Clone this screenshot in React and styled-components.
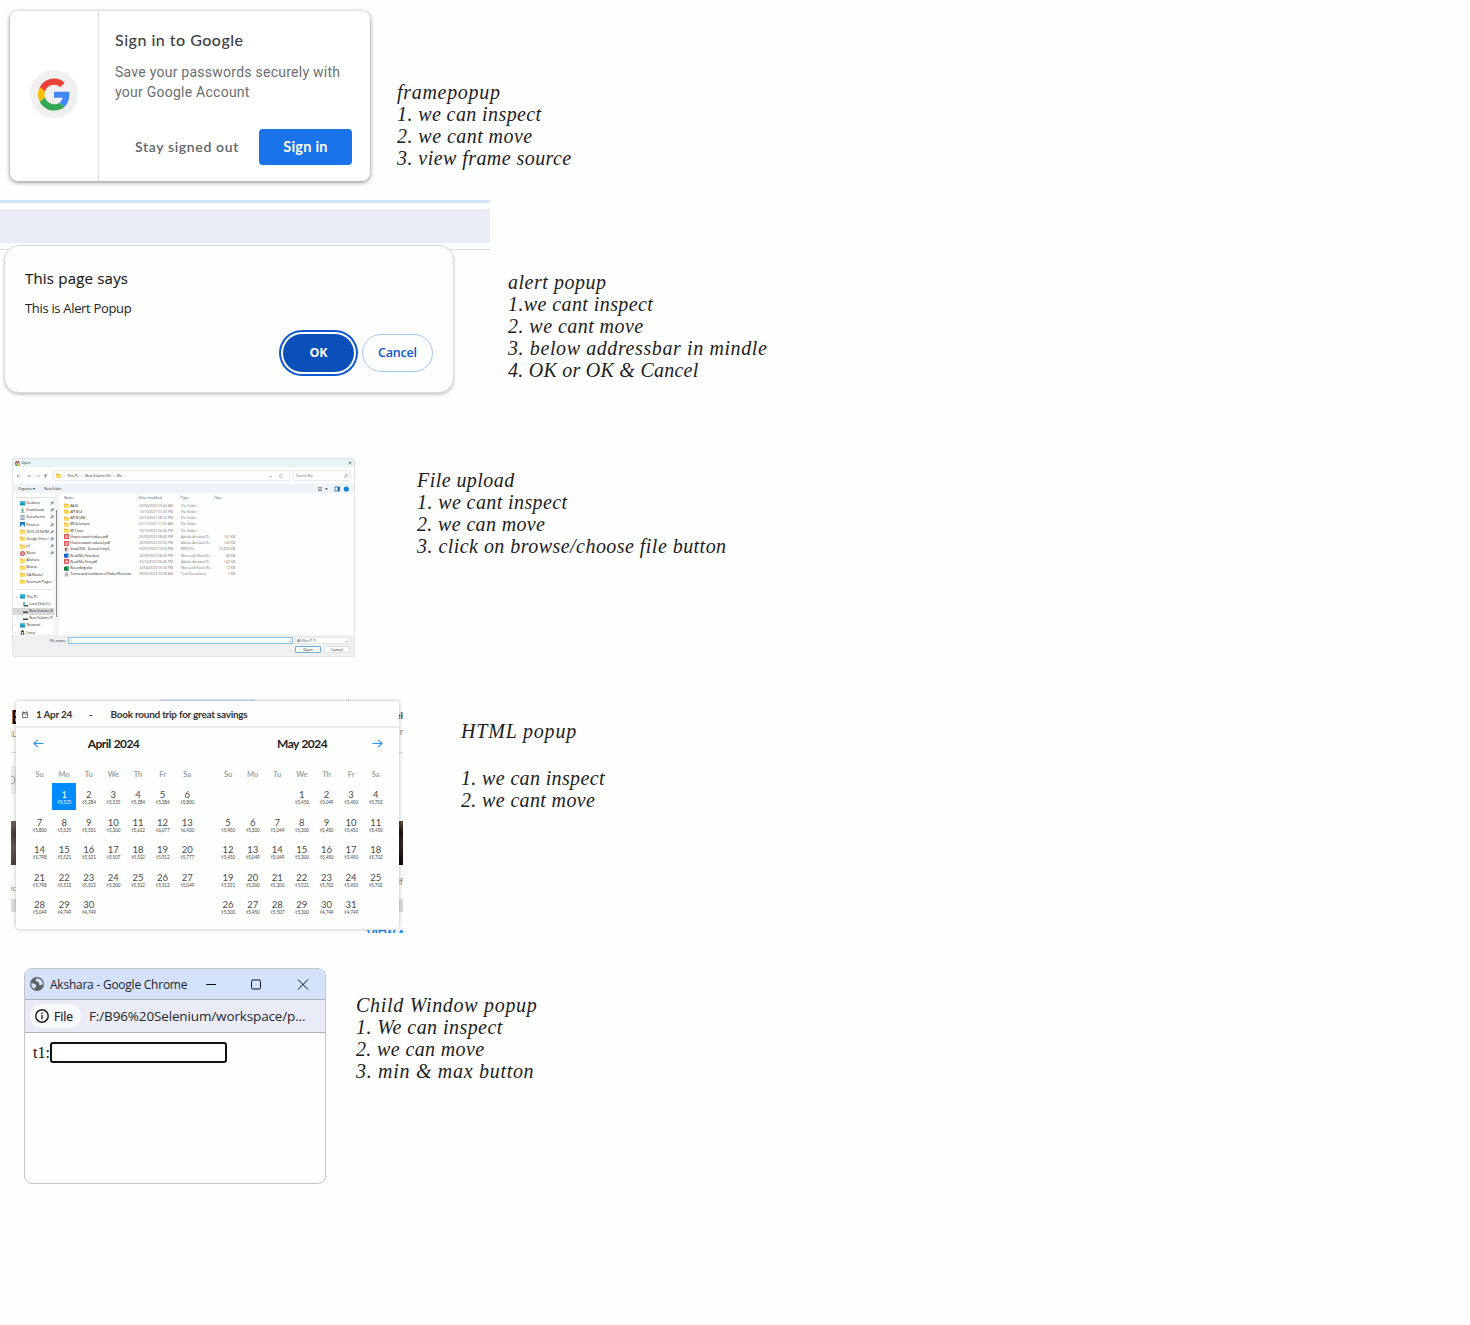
import React from "react";
import styled, { createGlobalStyle } from "styled-components";

const ui = '"Open Sans", "Noto Sans", sans-serif';
const lato = 'Lato, "Noto Sans", sans-serif';

const Global = createGlobalStyle`
  * { box-sizing: border-box; }
  body { margin: 0; background: #fefefe; }
  button, input { font: inherit; padding: 0; margin: 0; }
`;

const Page = styled.main`
  width: 1470px;
  height: 1325px;
  display: flex;
  flex-direction: column;
  overflow: hidden;
`;

const Section = styled.section`
  display: flex;
  align-items: flex-start;
  flex: none;
  height: ${(p) => p.$h}px;
  padding-left: ${(p) => p.$left || 0}px;
  padding-top: ${(p) => p.$top || 0}px;
`;

const NoteBox = styled.div`
  display: flex;
  flex-direction: column;
  margin-left: ${(p) => p.$left}px;
  margin-top: ${(p) => p.$top}px;
  font: italic 20px/22px "Liberation Serif", "Times New Roman", serif;
  color: #1c1c1c;
`;

const NoteLine = styled.div`
  height: 22px;
  white-space: pre;
  letter-spacing: ${(p) => p.$ls}px;
  margin-bottom: ${(p) => p.$gap || 0}px;
`;

function Note({ left, top, lines }) {
  return (
    <NoteBox $left={left} $top={top}>
      {lines.map(([text, ls, gap]) => (
        <NoteLine key={text} $ls={ls} $gap={gap}>{text}</NoteLine>
      ))}
    </NoteBox>
  );
}

/* ---------- Google sign-in bubble ---------- */

const SignCard = styled.div`
  display: flex;
  width: 360px;
  height: 170px;
  border-radius: 8px;
  background: #fff;
  box-shadow: 0 1px 4px rgba(0, 0, 0, 0.38), 0 2px 5px rgba(0, 0, 0, 0.12);
`;
const SignLogo = styled.div`
  width: 89px;
  border-right: 1px solid #e2e2e2;
  display: flex;
  align-items: center;
  justify-content: center;
`;
const LogoDisc = styled.div`
  width: 48px;
  height: 48px;
  margin-top: -4px;
  border-radius: 50%;
  background: #f0f0f0;
  display: flex;
  align-items: center;
  justify-content: center;
`;
const SignBody = styled.div`
  flex: 1;
  padding: 17px 18px 0 16px;
`;
const SignTitle = styled.h2`
  margin: 0;
  font: 500 16px/24px ${lato};
  letter-spacing: 0.5px;
  color: #3c4043;
`;
const SignText = styled.p`
  margin: 10px 0 0;
  font: 14px/20px Roboto, sans-serif;
  letter-spacing: 0.25px;
  color: #6a6e73;
  white-space: nowrap;
`;
const SignActions = styled.div`
  display: flex;
  justify-content: flex-end;
  align-items: center;
  margin-top: 27px;
  gap: 20px;
  font: 600 14px/36px ${lato};
`;
const GhostButton = styled.button`
  border: 0;
  background: none;
  color: #5f6368;
  letter-spacing: 0.65px;
`;
const BlueButton = styled.button`
  width: 93px;
  height: 36px;
  border: 0;
  border-radius: 4px;
  background: #1a73e8;
  color: #fff;
  font-weight: 700;
  font-size: 14.500px;
  letter-spacing: 0.25px;
`;

function GoogleG() {
  return (
    <svg width="32" height="33" viewBox="0 0 48 48">
      <path fill="#EA4335" d="M24 9.5c3.54 0 6.71 1.22 9.21 3.6l6.85-6.85C35.9 2.38 30.47 0 24 0 14.62 0 6.51 5.38 2.56 13.22l7.98 6.19C12.43 13.72 17.74 9.5 24 9.5z" />
      <path fill="#4285F4" d="M46.98 24.55c0-1.57-.15-3.09-.38-4.55H24v9.02h12.94c-.58 2.96-2.26 5.48-4.78 7.18l7.73 6c4.51-4.18 7.09-10.36 7.09-17.65z" />
      <path fill="#FBBC05" d="M10.53 28.59c-.48-1.45-.76-2.99-.76-4.59s.27-3.14.76-4.59l-7.98-6.19C.92 16.46 0 20.12 0 24c0 3.88.92 7.54 2.56 10.78l7.97-6.19z" />
      <path fill="#34A853" d="M24 48c6.48 0 11.93-2.13 15.89-5.81l-7.73-6c-2.15 1.45-4.92 2.3-8.16 2.3-6.26 0-11.57-4.22-13.47-9.91l-7.98 6.19C6.51 42.62 14.62 48 24 48z" />
    </svg>
  );
}

/* ---------- Alert popup ---------- */

const AlertArea = styled.div`
  width: 490px;
  height: 215px;
`;
const TabEdge = styled.div`
  height: 3px;
  background: #d3e3fd;
`;
const ToolStrip = styled.div`
  margin-top: 6px;
  height: 34px;
  background: #e9ecf6;
`;
const ToolEdge = styled.div`
  height: 7px;
  border-bottom: 1px solid #dcdcdc;
`;
const AlertBox = styled.div`
  position: relative;
  width: 450px;
  height: 148px;
  margin: -5px 0 0 4px;
  padding: 20px 20px 0;
  border: 1px solid #dadada;
  border-radius: 15px;
  background: #fefefe;
  box-shadow: 0 2px 3px rgba(0, 0, 0, 0.2);
  font-family: ${ui};
`;
const AlertTitle = styled.div`
  font-size: 15px;
  line-height: 24px;
  font-weight: 500;
  letter-spacing: 0.2px;
  color: #1f1f1f;
  -webkit-text-stroke: 0.2px #1f1f1f;
`;
const AlertText = styled.div`
  margin-top: 8px;
  font-size: 13px;
  line-height: 20px;
  letter-spacing: -0.32px;
  color: #222;
`;
const AlertActions = styled.div`
  display: flex;
  justify-content: flex-end;
  align-items: center;
  gap: 8px;
  margin-top: 16px;
`;
const Pill = styled.button`
  width: ${(p) => p.$w}px;
  height: 38px;
  border-radius: 19px;
  font: ${(p) => (p.$main ? 700 : 600)} 12.5px/1 ${ui};
  letter-spacing: -0.2px;
  color: ${(p) => (p.$main ? "#fff" : "#0b57d0")};
  background: ${(p) => (p.$main ? "#0b50b8" : "#fefefe")};
  border: ${(p) => (p.$main ? "0" : "1px solid #a8c7fa")};
  box-shadow: ${(p) => (p.$main ? "0 0 0 2px #fff, 0 0 0 4px #0b57d0" : "none")};
`;

/* ---------- Open-file dialog ---------- */

const FileDialog = styled.div`
  width: 343px;
  height: 199px;
  border: 1px solid #dfe3e6;
  border-radius: 2px;
  background: #fefefe;
  overflow: hidden;
  font: 3.7px/6px ${ui};
  letter-spacing: -0.13px;
  color: #333;
`;
const FRow = styled.div`
  display: flex;
  align-items: center;
  height: ${(p) => p.$h}px;
  padding: 0 ${(p) => p.$px || 0}px;
  gap: ${(p) => p.$gap || 0}px;
  background: ${(p) => p.$bg || "transparent"};
  white-space: nowrap;
`;
const Spacer = styled.div`
  flex: ${(p) => (p.$w ? `0 0 ${p.$w}px` : "1")};
`;
const AddressBox = styled.div`
  display: flex;
  align-items: center;
  width: ${(p) => p.$w}px;
  height: 11px;
  padding: 0 2px;
  gap: ${(p) => p.$gap || 2}px;
  border: 1px solid #ececec;
  color: ${(p) => (p.$dim ? "#777" : "#333")};
`;
const FileMain = styled.div`
  display: flex;
  height: 142px;
`;
const Side = styled.div`
  width: 41px;
  height: 142px;
  padding-top: 3.500px;
  overflow: hidden;
`;
const SideLine = styled.div`
  height: 1px;
  margin: ${(p) => p.$m};
  background: #e2e2e2;
`;
const SideItem = styled.div`
  display: flex;
  align-items: center;
  gap: 1.2px;
  height: 7.16px;
  padding-left: ${(p) => p.$pl}px;
  background: ${(p) => (p.$active ? "#d8d8d8" : "transparent")};
  white-space: nowrap;
`;
const SideName = styled.span`
  flex: 1;
`;
const Twist = styled.span`
  width: 4px;
  color: #666;
`;
const Scroll = styled.div`
  width: 5px;
  padding: 17px 1px 0 2px;
  background: #f3f3f3;
`;
const Thumb = styled.div`
  width: 1px;
  height: 107px;
  background: #8a8a8a;
`;
const Files = styled.div`
  flex: 1;
  padding: 0 0 0 5px;
`;
const FileLine = styled.div`
  display: grid;
  grid-template-columns: 75px 42px 34px 20px;
  align-items: center;
  height: ${(p) => (p.$head ? 9 : 6.27)}px;
  margin-bottom: ${(p) => (p.$head ? 0.4 : 0)}px;
  color: ${(p) => (p.$head ? "#4d5f7a" : "#7c7c7c")};
  white-space: nowrap;
`;
const HeadCell = styled.span`
  height: 9px;
  margin-left: -2px;
  padding-left: 1px;
  line-height: 9px;
  border-left: 1px solid #f0f0f0;
`;
const FileName = styled.span`
  display: flex;
  align-items: center;
  gap: 1.2px;
  letter-spacing: -0.2px;
  color: ${(p) => (p.$head ? "inherit" : "#2c2c2c")};
`;
const SizeCell = styled.span`
  text-align: right;
`;
const FileFoot = styled.div`
  height: 24px;
  padding: 2px 4px 0 0;
  background: #f0f0f0;
`;
const FootInput = styled.div`
  width: ${(p) => p.$w}px;
  height: 7px;
  display: flex;
  align-items: center;
  justify-content: space-between;
  padding: 0 1px;
  background: #fff;
  border: 1px solid ${(p) => (p.$active ? "#84bfe6" : "#e4e4e4")};
`;
const FootButton = styled.button`
  width: 26px;
  height: 7px;
  line-height: 5px;
  background: #fdfdfd;
  border: 1px solid ${(p) => (p.$active ? "#6fb0de" : "#e0e0e0")};
  border-radius: 1px;
`;

function MiniIcon({ kind }) {
  const s = { width: 5, height: 5, viewBox: "0 0 10 10", style: { flex: "none" } };
  if (kind === "folder") return <svg {...s}><path d="M0 1h4l1 1.5h5V9H0z" fill="#f3bd3c" /><path d="M0 4h10v5H0z" fill="#ffd765" /></svg>;
  if (kind === "pdf") return <svg {...s}><rect width="10" height="10" fill="#e9565a" /><path d="M2 8c3-2 3-6 3-6s1 4 3 4-4 0-6 2" stroke="#fff" strokeWidth="1.2" fill="none" /></svg>;
  if (kind === "mp4") return <svg {...s}><rect x="1" width="8" height="10" fill="#ddd" /><path d="M2 2h5l-3 6h-2z" fill="#b05a36" /></svg>;
  if (kind === "doc") return <svg {...s}><rect x="2" width="8" height="10" fill="#7fb2ea" /><rect y="2" width="7" height="7" fill="#185abd" /></svg>;
  if (kind === "xls") return <svg {...s}><rect x="2" width="8" height="10" fill="#58b883" /><rect y="2" width="7" height="7" fill="#107c41" /></svg>;
  if (kind === "txt") return <svg {...s}><rect x="1" width="8" height="10" fill="#ddd" /><path d="M2 3h6M2 5h6M2 7h6" stroke="#888" strokeWidth=".8" /></svg>;
  if (kind === "down") return <svg {...s}><path d="M5 0v7M2 4l3 3 3-3M1 9.5h8" stroke="#18a06a" strokeWidth="1.4" fill="none" /></svg>;
  if (kind === "page") return <svg {...s}><rect x="1" width="8" height="10" fill="#8ba6bd" /><path d="M3 3h4M3 5h4M3 7h4" stroke="#fff" /></svg>;
  if (kind === "pic") return <svg {...s}><rect width="10" height="10" fill="#1778c8" /><path d="M0 10l5-6 5 6z" fill="#d9efff" /></svg>;
  if (kind === "music") return <svg {...s}><circle cx="5" cy="5" r="5" fill="#d65a50" /><circle cx="5" cy="5" r="2" fill="#fff" /></svg>;
  if (kind === "drive") return <svg {...s}><path d="M0 5h10v3H0z" fill="#444" /></svg>;
  if (kind === "disk") return <svg {...s}><path d="M0 1h4v4H0z" fill="#1696e0" /><path d="M1 6h9v3H1z" fill="#555" /></svg>;
  if (kind === "linux") return <svg {...s}><path d="M5 0c4 2 2 5 4 9H1c2-4 0-7 4-9z" fill="#222" /><circle cx="5" cy="6" r="2" fill="#fff" /></svg>;
  if (kind === "chrome") return <svg {...s}><circle cx="5" cy="5" r="5" fill="#36a852" /><path d="M5 5L.7 2.5A5 5 0 019.3 2.5z" fill="#e94435" /><path d="M5 5l4.4-2.5A5 5 0 015 10z" fill="#fbbc05" /><circle cx="5" cy="5" r="2" fill="#4285f4" stroke="#fff" /></svg>;
  return <svg {...s}><rect width="10" height="8" y="1" fill="#1590b8" /><path d="M0 1h10v4H0z" fill="#37b2d8" /></svg>;
}

function PinIcon() {
  return (
    <svg width="4" height="4" viewBox="0 0 8 8">
      <path d="M4.500 .5L7.500 3.500 6 4 4.500 6.500 1.500 3.500 4 2zM3 5L.5 7.500" fill="#8fa5b3" stroke="#68808f" />
    </svg>
  );
}

const pinned = [
  ["pc", "Desktop", 1], ["down", "Downloads", 1], ["page", "Documents", 1], ["pic", "Pictures", 1],
  ["folder", "2019-20 MOM", 1], ["folder", "Google Drive (", 1], ["folder", "p1", 1], ["music", "Music", 1],
  ["folder", "Akshara"], ["folder", "Bhanu"], ["folder", "QA Master"], ["folder", "Selenium Pages"],
];
const tree = [
  ["pc", "This PC", 2, "⌄"], ["disk", "Local Disk (C:)", 4.5, "›"], ["drive", "New Volume (E", 4.5, "›", true],
  ["drive", "New Volume (F", 4.5, "›"], ["pc", "Network", 2, "›"], ["linux", "Linux", 2, "›"],
];
const files = [
  ["folder", "AA B", "22/06/2023 10:24 AM", "File folder", ""],
  ["folder", "API B14", "10/10/2021 07:25 PM", "File folder", ""],
  ["folder", "API B14M", "25/10/2021 08:12 PM", "File folder", ""],
  ["folder", "B9 Selenium", "01/11/2021 11:05 AM", "File folder", ""],
  ["folder", "BT1 Java", "10/10/2021 06:26 PM", "File folder", ""],
  ["pdf", "How to watch videos.pdf", "26/09/2023 08:06 PM", "Adobe Acrobat D...", "141 KB"],
  ["pdf", "How to watch videos2.pdf", "26/09/2023 02:55 PM", "Adobe Acrobat D...", "142 KB"],
  ["mp4", "Install IDK - Session1.mp4", "05/07/2023 10:53 PM", "MP4 File", "23,823 KB"],
  ["doc", "Read Me First.docx", "26/09/2023 08:06 PM", "Microsoft Word D...", "46 KB"],
  ["pdf", "Read Me First.pdf", "22/12/2022 06:45 PM", "Adobe Acrobat D...", "142 KB"],
  ["xls", "Recording.xlsx", "22/04/2023 05:00 PM", "Microsoft Excel W...", "12 KB"],
  ["txt", "Terms and conditions of Video Recor.txt", "09/05/2023 10:49 AM", "Text Document", "1 KB"],
];

function OpenDialog() {
  return (
    <FileDialog>
      <FRow $h={8} $bg="#e8f3f8" $px={2} $gap={1.5}>
        <MiniIcon kind="chrome" /><span>Open</span><Spacer />
        <svg width="4" height="4" viewBox="0 0 8 8"><path d="M1 1l6 6M7 1L1 7" stroke="#333" /></svg>
      </FRow>
      <FRow $h={17} $gap={3}>
        <svg width="37" height="6" viewBox="0 0 37 6" fill="none" stroke="#8c8c8c" strokeWidth=".6">
          <path d="M7.500 3H4M5.500 1.500L4 3l1.500 1.500M14 3h3.500M16 1.500L17.500 3 16 4.500M23.500 2.500l1.500 1.500 1.500-1.500" />
          <path d="M32.500 5V1.500M31 3l1.500-1.500L34 3" stroke="#666" />
        </svg>
        <AddressBox $w={237} $gap={2.6}>
          <MiniIcon kind="folder" /><span>›</span><span>This PC</span><span>›</span>
          <span>New Volume (E:)</span><span>›</span><span>Rio</span><span>›</span>
          <Spacer /><span>⌄</span><Spacer $w={2} />
          <svg width="4" height="4" viewBox="0 0 8 8"><path d="M7 4a3 3 0 11-1-2.3V0" stroke="#888" fill="none" /></svg>
          <Spacer $w={1} />
        </AddressBox>
        <AddressBox $w={58} $dim>
          <span>Search Rio</span><Spacer />
          <svg width="4" height="4" viewBox="0 0 8 8"><circle cx="5" cy="3" r="2.4" stroke="#777" fill="none" /><path d="M3.2 4.8L0 8" stroke="#777" /></svg>
        </AddressBox>
      </FRow>
      <FRow $h={9} $bg="#eff3f7" $px={5} $gap={9}>
        <span>Organize ▾</span><span>New folder</span><Spacer />
        <svg width="32" height="6" viewBox="2 0 32 6">
          <path d="M3 1.500h4M3 3h4M3 4.500h4" stroke="#777" strokeWidth=".8" />
          <path d="M10 2.200h3l-1.500 2z" fill="#456" />
          <rect x="20" y="1" width="4.500" height="4" fill="#fff" stroke="#1f6fa8" strokeWidth=".8" />
          <rect x="22.500" y="1" width="2" height="4" fill="#1f6fa8" />
          <circle cx="31.300" cy="3" r="2.600" fill="#0b84d8" />
        </svg>
      </FRow>
      <FileMain>
        <Side>
          <SideLine $m="0 2px 2px 3px" />
          {pinned.map(([k, n, p]) => (
            <SideItem key={n} $pl={7}><MiniIcon kind={k} /><SideName>{n}</SideName>{p && <PinIcon />}</SideItem>
          ))}
          <SideLine $m="3.500px 2px 3.400px 3px" />
          {tree.map(([k, n, pl, c, a], i) => (
            <SideItem key={i} $pl={pl} $active={a}><Twist>{c}</Twist><MiniIcon kind={k} /><SideName>{n}</SideName></SideItem>
          ))}
        </Side>
        <Scroll><Thumb /></Scroll>
        <Files>
          <FileLine $head>
            <FileName $head>Name</FileName><HeadCell>Date modified</HeadCell><HeadCell>Type</HeadCell><HeadCell>Size</HeadCell>
          </FileLine>
          {files.map(([k, n, d, t, s]) => (
            <FileLine key={n}>
              <FileName><MiniIcon kind={k} />{n}</FileName><span>{d}</span><span>{t}</span><SizeCell>{s}</SizeCell>
            </FileLine>
          ))}
        </Files>
      </FileMain>
      <FileFoot>
        <FRow $h={7} $gap={2}>
          <Spacer /><span>File name:</span><FootInput $w={225} $active><span>|</span><span>⌄</span></FootInput>
          <FootInput $w={55}><span>All Files (*.*)</span><span>⌄</span></FootInput>
        </FRow>
        <FRow $h={10} $gap={3}>
          <Spacer /><FootButton $active>Open</FootButton><FootButton>Cancel</FootButton>
        </FRow>
      </FileFoot>
    </FileDialog>
  );
}

/* ---------- Calendar popup ---------- */

const CalScene = styled.div`
  display: grid;
  grid-template-columns: 5px 383px 4px;
  grid-template-rows: 2px 228px 4px;
  width: 392px;
  height: 234px;
  overflow: hidden;
  font-family: ${lato};
`;
const SceneTop = styled.div`
  grid-column: 1 / -1;
  display: flex;
  padding-left: 149px;
  gap: 93px;
`;
const TopTab = styled.div`
  width: ${(p) => p.$w}px;
  height: 2px;
  background: ${(p) => p.$bg};
`;
const SceneBottom = styled.div`
  grid-column: 1 / -1;
  padding-left: 356px;
  overflow: hidden;
  height: 4px;
  font: 900 11px/9px ${lato};
  letter-spacing: -0.2px;
  color: #1684f5;
  white-space: nowrap;
`;
const Edge = styled.div`
  display: flex;
  flex-direction: column;
  overflow: hidden;
`;
const EdgeText = styled.div`
  display: flex;
  justify-content: ${(p) => (p.$start ? "flex-start" : "flex-end")};
  flex: none;
  height: ${(p) => p.$h}px;
  font: ${(p) => p.$weight || 400} ${(p) => p.$size}px/${(p) => p.$h}px ${lato};
  color: ${(p) => p.$color || "#888"};
`;
const EdgeBlock = styled.div`
  flex: none;
  height: ${(p) => p.$h}px;
  background: ${(p) => p.$bg || "transparent"};
`;
const CalCard = styled.div`
  position: relative;
  background: #fefefe;
  border-radius: 3px;
  box-shadow: 0 0 4px rgba(0, 0, 0, 0.28);
`;
const CalTop = styled.div`
  display: flex;
  align-items: center;
  height: 27px;
  padding-left: 6px;
  border-bottom: 2px solid #ebebeb;
  font: 700 10px/14px ${lato};
  color: #333;
  white-space: pre;
`;
const TopText = styled.span`
  width: ${(p) => p.$w}px;
  letter-spacing: ${(p) => p.$ls || 0}px;
`;
const Months = styled.div`
  display: flex;
  padding: 7px 0 0 11.300px;
  gap: 16px;
`;
const Month = styled.div`
  width: 172.500px;
`;
const MonthHead = styled.div`
  display: grid;
  grid-template-columns: 22px 1fr 22px;
  align-items: center;
  justify-items: center;
  height: 17px;
  font: 700 12px/17px ${lato};
  letter-spacing: -0.55px;
  word-spacing: 0.6px;
  color: #222;
`;
const Week = styled.div`
  display: grid;
  grid-template-columns: repeat(7, 24.600px);
  height: ${(p) => p.$h || 27.6}px;
  margin-top: ${(p) => p.$mt || 0}px;
`;
const WeekDay = styled.span`
  text-align: center;
  font: 700 7.500px/10px ${lato};
  color: #9aa5a5;
`;
const Day = styled.div`
  display: flex;
  flex-direction: column;
  align-items: center;
  padding-top: 7.500px;
  background: ${(p) => (p.$on ? "#008cff" : "transparent")};
  color: ${(p) => (p.$on ? "#fff" : "#4a4a4a")};
`;
const DayNum = styled.span`
  font: 9.500px/10px ${lato};
`;
const Price = styled.span`
  font: 4.700px/5px ${lato};
  letter-spacing: -0.1px;
`;

const april = [
  [null, [1, "5,525"], [2, "5,284"], [3, "5,525"], [4, "5,284"], [5, "5,284"], [6, "5,800"]],
  [[7, "5,800"], [8, "5,525"], [9, "5,531"], [10, "5,300"], [11, "5,612"], [12, "6,077"], [13, "6,420"]],
  [[14, "5,798"], [15, "5,521"], [16, "5,521"], [17, "5,507"], [18, "5,512"], [19, "5,512"], [20, "5,777"]],
  [[21, "5,798"], [22, "5,512"], [23, "5,512"], [24, "5,300"], [25, "5,512"], [26, "5,512"], [27, "5,049"]],
  [[28, "5,049"], [29, "4,749"], [30, "4,749"]],
];
const may = [
  [null, null, null, [1, "5,450"], [2, "5,049"], [3, "5,450"], [4, "5,702"]],
  [[5, "5,450"], [6, "5,300"], [7, "5,049"], [8, "5,300"], [9, "5,450"], [10, "5,450"], [11, "5,450"]],
  [[12, "5,450"], [13, "5,049"], [14, "5,049"], [15, "5,300"], [16, "5,450"], [17, "5,450"], [18, "5,702"]],
  [[19, "5,521"], [20, "5,300"], [21, "5,300"], [22, "5,521"], [23, "5,702"], [24, "5,450"], [25, "5,702"]],
  [[26, "5,300"], [27, "5,450"], [28, "5,507"], [29, "5,300"], [30, "4,749"], [31, "4,749"]],
];

function Arrow({ flip }) {
  return (
    <svg width="11" height="9" viewBox="0 0 11 9">
      <path d={flip ? "M.5 4.500h9.500M6.300 .8L10 4.500 6.300 8.200" : "M10.500 4.500H1M4.700 .8L1 4.500l3.700 3.700"} fill="none" stroke="#2b93f6" strokeWidth="1.100" />
    </svg>
  );
}

function MonthGrid({ title, weeks, selected, prev, next }) {
  return (
    <Month>
      <MonthHead><span>{prev && <Arrow />}</span><span>{title}</span><span>{next && <Arrow flip />}</span></MonthHead>
      <Week $h={10} $mt={17.5}>
        {["Su", "Mo", "Tu", "We", "Th", "Fr", "Sa"].map((d) => <WeekDay key={d}>{d}</WeekDay>)}
      </Week>
      <div>
        {weeks.map((w, i) => (
          <Week key={i} $mt={i ? 0 : 3}>
            {w.map((d, j) => (
              <Day key={j} $on={!!d && d[0] === selected}>
                {d && <><DayNum>{d[0]}</DayNum><Price>₹{d[1]}</Price></>}
              </Day>
            ))}
          </Week>
        ))}
      </div>
    </Month>
  );
}

function CalendarPopup() {
  return (
    <CalScene>
      <SceneTop><TopTab $w={95} $bg="#d9e9f7" /><TopTab $w={1} $bg="#ccc" /></SceneTop>
      <Edge>
        <EdgeBlock $h={7} />
        <EdgeText $h={18} $size={19} $weight={900} $color="#111" $start>B</EdgeText>
        <EdgeText $h={16} $size={8}>BL</EdgeText>
        <EdgeBlock $h={10} />
        <EdgeBlock $h={1} $bg="#ddd" />
        <EdgeBlock $h={13} />
        <EdgeBlock $h={28} $bg="#eee">
          <svg width="5" height="28" viewBox="0 0 5 28"><circle cx="0" cy="14" r="4" fill="none" stroke="#aaa" /></svg>
        </EdgeBlock>
        <EdgeBlock $h={27} />
        <EdgeBlock $h={44} $bg="linear-gradient(#6e635c, #4c3d35 30%, #67574d 60%, #4b3f39)" />
        <EdgeBlock $h={16} />
        <EdgeText $h={14} $size={8}>tic</EdgeText>
        <EdgeBlock $h={4} />
        <EdgeBlock $h={13} $bg="#ddd" />
      </Edge>
      <CalCard>
        <CalTop>
          <TopText $w={14}>
            <svg width="6" height="7" viewBox="0 0 6 7"><path d="M.5 1.500h5v5h-5zM.5 3h5M1.500 .3v1.400M4.500 .3v1.400" fill="none" stroke="#555" strokeWidth=".8" /></svg>
          </TopText>
          <TopText $w={53} $ls={-0.25}>1 Apr 24</TopText>
          <TopText $w={21.5}>-</TopText>
          <TopText $w={200} $ls={-0.26}>Book round trip for great savings</TopText>
        </CalTop>
        <Months>
          <MonthGrid title="April 2024" weeks={april} selected={1} prev />
          <MonthGrid title="May 2024" weeks={may} next />
        </Months>
      </CalCard>
      <Edge>
        <EdgeBlock $h={7} />
        <EdgeText $h={14} $size={10} $weight={700} $color="#444">el</EdgeText>
        <EdgeBlock $h={3} />
        <EdgeText $h={14} $size={9}>r</EdgeText>
        <EdgeBlock $h={13} />
        <EdgeBlock $h={1} $bg="#ddd" />
        <EdgeBlock $h={68} />
        <EdgeBlock $h={44} $bg="linear-gradient(#604833, #1b1310 28%, #33251d 50%, #0d0a09)" />
        <EdgeBlock $h={10} />
        <EdgeText $h={14} $size={9}>if</EdgeText>
        <EdgeBlock $h={10} />
        <EdgeBlock $h={13} $bg="#ddd" />
      </Edge>
      <SceneBottom>VIEW ALL</SceneBottom>
    </CalScene>
  );
}

/* ---------- Child window ---------- */

const Win = styled.div`
  width: 302px;
  height: 216px;
  border: 1px solid #c2c4c8;
  border-radius: 8px;
  background: #fefefe;
  overflow: hidden;
  font-family: ${ui};
`;
const WinTitle = styled.div`
  display: flex;
  align-items: center;
  height: 31px;
  padding-left: 5px;
  background: #d3e2fd;
  border-bottom: 1px solid #aeb1b8;
  font-size: 12px;
  color: #1f1f1f;
`;
const WinName = styled.span`
  width: 156px;
  margin-left: 6px;
  letter-spacing: -0.24px;
  white-space: nowrap;
`;
const WinBar = styled.div`
  display: flex;
  align-items: center;
  height: 33px;
  padding-left: 5px;
  background: #e9ecf6;
  border-bottom: 1px solid #aeb1b8;
  color: #26282c;
`;
const Chip = styled.span`
  display: flex;
  align-items: center;
  gap: 5px;
  width: 51px;
  height: 24px;
  padding-left: 5px;
  border-radius: 12px;
  background: #f9fafd;
  font-size: 12px;
  -webkit-text-stroke: 0.25px #26282c;
`;
const Url = styled.span`
  margin-left: 8px;
  font-size: 13.500px;
  letter-spacing: -0.14px;
  white-space: nowrap;
`;
const WinBody = styled.div`
  display: flex;
  align-items: center;
  padding: 9px 8px 0;
  font: 16px/21px "Liberation Serif", serif;
  color: #111;
`;
const Field = styled.input`
  width: 177px;
  height: 21px;
  border: 2px solid #111;
  border-radius: 3px;
  background: #fff;
`;

function ChildWindow() {
  return (
    <Win>
      <WinTitle>
        <svg width="14" height="14" viewBox="0 0 14 14">
          <circle cx="7" cy="7" r="7" fill="#5f6368" />
          <path d="M7.500 1.300C5.800 1.700 5.500 3 6 4c.6 1 2.500.4 3 1.600.4 1-.5 1.900.6 2.400 1 .4 2-.4 3-.2A5.700 5.700 0 007.500 1.300zM1.400 6c1.500.2 3 .6 4.300 1.400 1 .7.700 1.700 0 2.300-.7.700-.8 1.700-1 2.400A5.700 5.700 0 011.400 6z" fill="#d3e2fd" />
        </svg>
        <WinName>Akshara - Google Chrome</WinName>
        <svg width="104" height="12" viewBox="0 0 104 12" fill="none" stroke="#111">
          <path d="M0 6.500h10M92 1.500l10 10M102 1.500l-10 10" />
          <rect x="45.500" y="2" width="9" height="9" rx="1.500" />
        </svg>
      </WinTitle>
      <WinBar>
        <Chip>
          <svg width="14" height="14" viewBox="0 0 14 14">
            <circle cx="7" cy="7" r="6.200" fill="none" stroke="#222" strokeWidth="1.500" />
            <path d="M7 6v4.300M7 3.500v1.400" stroke="#222" strokeWidth="1.400" />
          </svg>
          File
        </Chip>
        <Url>F:/B96%20Selenium/workspace/p...</Url>
      </WinBar>
      <WinBody>t1:<Field /></WinBody>
    </Win>
  );
}

export default function App() {
  return (
    <Page>
      <Global />
      <Section $h={200} $left={10} $top={11}>
        <SignCard>
          <SignLogo><LogoDisc><GoogleG /></LogoDisc></SignLogo>
          <SignBody>
            <SignTitle>Sign in to Google</SignTitle>
            <SignText>Save your passwords securely with<br />your Google Account</SignText>
            <SignActions><GhostButton>Stay signed out</GhostButton><BlueButton>Sign in</BlueButton></SignActions>
          </SignBody>
        </SignCard>
        <Note left={27} top={70} lines={[["framepopup", 0.7], ["1. we can inspect", 0.4], ["2. we cant move", 0.45], ["3. view frame source", 0.44]]} />
      </Section>
      <Section $h={258}>
        <AlertArea>
          <TabEdge /><ToolStrip /><ToolEdge />
          <AlertBox>
            <AlertTitle>This page says</AlertTitle>
            <AlertText>This is Alert Popup</AlertText>
            <AlertActions><Pill $main $w={71}>OK</Pill><Pill $w={71}>Cancel</Pill></AlertActions>
          </AlertBox>
        </AlertArea>
        <Note left={18} top={71} lines={[["alert popup", 0.53], ["1.we cant inspect", 0.41], ["2. we cant move", 0.45], ["3. below addressbar in mindle", 0.6], ["4. OK or OK & Cancel", 0.25]]} />
      </Section>
      <Section $h={241} $left={12}>
        <OpenDialog />
        <Note left={62} top={11} lines={[["File upload", 0.44], ["1. we cant inspect", 0.4], ["2. we can move", 0.36], ["3. click on browse/choose file button", 0.46]]} />
      </Section>
      <Section $h={269} $left={11}>
        <CalendarPopup />
        <Note left={58} top={21} lines={[["HTML popup", 0.8, 25], ["1. we can inspect", 0.36], ["2. we cant move", 0.36]]} />
      </Section>
      <Section $h={230} $left={24}>
        <ChildWindow />
        <Note left={30} top={26} lines={[["Child Window popup", 0.7], ["1. We can inspect", 0.44], ["2. we can move", 0.37], ["3. min & max button", 0.7]]} />
      </Section>
    </Page>
  );
}
